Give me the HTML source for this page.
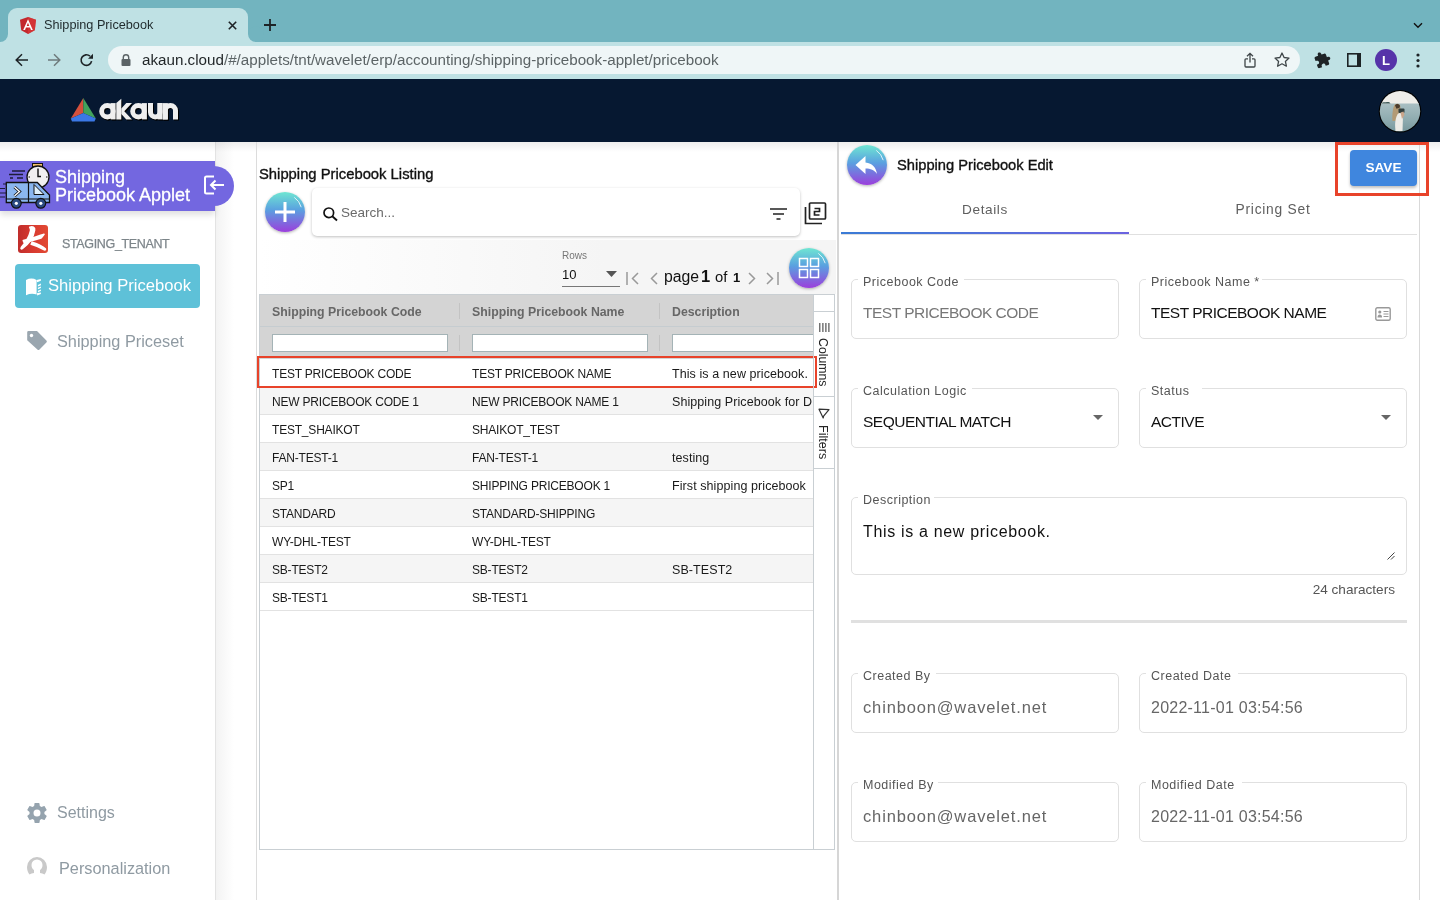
<!DOCTYPE html>
<html><head><meta charset="utf-8">
<style>
*{box-sizing:border-box;margin:0;padding:0}
html,body{width:1440px;height:900px;overflow:hidden;background:#fff;font-family:"Liberation Sans",sans-serif;position:relative}
.a{position:absolute}
.t{position:absolute;white-space:nowrap;line-height:1;will-change:transform}
svg{position:absolute;overflow:visible}
/* chrome */
#tabstrip{left:0;top:0;width:1440px;height:42px;background:#72b4bf}
#tab{left:8px;top:8px;width:240px;height:34px;background:#bfe1e4;border-radius:9px 9px 0 0}
#toolbar{left:0;top:42px;width:1440px;height:37px;background:#bfe1e4}
#addr{left:108px;top:46px;width:1192px;height:28px;background:#eff6f7;border-radius:14px}
#hdr{left:0;top:79px;width:1440px;height:63px;background:#061831}
</style></head><body>
<!-- ============ BROWSER CHROME ============ -->
<div id="tabstrip" class="a"></div>
<div id="tab" class="a"></div>
<div class="a" style="left:0;top:34px;width:8px;height:8px;background:#bfe1e4"></div>
<div class="a" style="left:-8px;top:26px;width:16px;height:16px;background:#72b4bf;border-radius:50%"></div>
<div class="a" style="left:248px;top:34px;width:8px;height:8px;background:#bfe1e4"></div>
<div class="a" style="left:248px;top:26px;width:16px;height:16px;background:#72b4bf;border-radius:50%"></div>
<div id="toolbar" class="a"></div>
<!-- favicon -->
<svg style="left:20px;top:17px" width="16" height="17" viewBox="0 0 16 17"><path d="M8 0L0 2.8l1.2 10.4L8 17l6.8-3.8L16 2.8z" fill="#c3292e"/><path d="M8 0v17l6.8-3.8L16 2.8z" fill="#dd3a3a" opacity=".6"/><path d="M8 2.2L3.2 13h1.8l1-2.4h4l1 2.4h1.8zM6.7 9L8 5.8 9.3 9z" fill="#fff"/></svg>
<div class="t" style="left:44px;top:18.5px;font-size:12.7px;color:#1f2a2c">Shipping Pricebook</div>
<svg style="left:227.5px;top:20.5px" width="9" height="9" viewBox="0 0 9 9"><path d="M.8.8l7.4 7.4M8.2.8L.8 8.2" stroke="#1d2326" stroke-width="1.6"/></svg>
<svg style="left:264px;top:19px" width="12" height="12" viewBox="0 0 12 12"><path d="M6 0v12M0 6h12" stroke="#1d2326" stroke-width="1.8"/></svg>
<svg style="left:1413px;top:22px" width="10" height="6" viewBox="0 0 10 6"><path d="M1 1.2l4 4 4-4" stroke="#111" stroke-width="1.4" fill="none"/></svg>
<!-- nav -->
<svg style="left:15px;top:53px" width="14" height="14" viewBox="0 0 14 14"><path d="M13 7H1.5M7 1.2L1.2 7 7 12.8" stroke="#1d2326" stroke-width="1.5" fill="none"/></svg>
<svg style="left:47px;top:53px" width="14" height="14" viewBox="0 0 14 14"><path d="M1 7h11.5M7 1.2L12.8 7 7 12.8" stroke="#6e7a7c" stroke-width="1.5" fill="none"/></svg>
<svg style="left:79px;top:53px" width="15" height="15" viewBox="0 0 15 15"><path d="M12.6 8.2A5.3 5.3 0 1 1 11 3.2" stroke="#1d2326" stroke-width="1.6" fill="none"/><path d="M14 0.8v5H9z" fill="#1d2326"/></svg>
<div id="addr" class="a"></div>
<svg style="left:121px;top:54px" width="10" height="12" viewBox="0 0 10 12"><path d="M2.3 5V3.5a2.7 2.7 0 0 1 5.4 0V5" stroke="#5b6366" stroke-width="1.4" fill="none"/><rect x="0.5" y="5" width="9" height="7" rx="1" fill="#5b6366"/></svg>
<div class="t" style="left:142px;top:52px;font-size:15.2px;color:#1f2426">akaun.cloud<span style="color:#5c6466">/#/applets/tnt/wavelet/erp/accounting/shipping-pricebook-applet/pricebook</span></div>
<svg style="left:1243px;top:52px" width="14" height="16" viewBox="0 0 14 16"><path d="M7 10.5V1.5M4 4.3L7 1.3l3 3" stroke="#3e4548" stroke-width="1.3" fill="none"/><path d="M5 6.8H3a1 1 0 0 0-1 1V14a1 1 0 0 0 1 1h8a1 1 0 0 0 1-1V7.8a1 1 0 0 0-1-1H9" stroke="#3e4548" stroke-width="1.3" fill="none"/></svg>
<svg style="left:1274px;top:52px" width="16" height="15" viewBox="0 0 16 15"><path d="M8 1l2.1 4.5 4.9.6-3.6 3.3 1 4.8L8 11.8l-4.4 2.4 1-4.8L1 6.1l4.9-.6z" stroke="#3e4548" stroke-width="1.3" fill="none" stroke-linejoin="round"/></svg>
<svg style="left:1314px;top:51px" width="17" height="17" viewBox="0 0 24 24"><path d="M20.5 11H19V7c0-1.1-.9-2-2-2h-4V3.5C13 2.12 11.88 1 10.5 1S8 2.12 8 3.5V5H4c-1.1 0-1.99.9-1.99 2v3.8H3.5c1.49 0 2.7 1.21 2.7 2.7s-1.21 2.7-2.7 2.7H2V20c0 1.1.9 2 2 2h3.8v-1.5c0-1.49 1.21-2.7 2.7-2.7 1.49 0 2.7 1.21 2.7 2.7V22H17c1.1 0 2-.9 2-2v-4h1.5c1.38 0 2.5-1.12 2.5-2.5S21.88 11 20.5 11z" fill="#1d2326" transform="rotate(-20 12 12)"/></svg>
<svg style="left:1347px;top:53px" width="14" height="14" viewBox="0 0 14 14"><rect x="0.8" y="0.8" width="12.4" height="12.4" stroke="#1d2326" stroke-width="1.6" fill="none"/><rect x="10" y="0.8" width="3.2" height="12.4" fill="#1d2326"/></svg>
<div class="a" style="left:1375px;top:49px;width:22px;height:22px;border-radius:50%;background:#5633a9"></div>
<div class="t" style="left:1381.5px;top:54px;font-size:13px;font-weight:bold;color:#fff">L</div>
<svg style="left:1416px;top:53px" width="4" height="15" viewBox="0 0 4 15"><circle cx="2" cy="2" r="1.6" fill="#1d2326"/><circle cx="2" cy="7.5" r="1.6" fill="#1d2326"/><circle cx="2" cy="13" r="1.6" fill="#1d2326"/></svg>
<!-- ============ APP HEADER ============ -->
<div id="hdr" class="a"></div>
<svg style="left:0;top:0" width="200" height="142" viewBox="0 0 200 142">
<path d="M83.3 98L70.8 118.5 83.3 113z" fill="#d5503c"/><path d="M83.3 98L95.8 118.5 83.3 113z" fill="#42a35c"/><path d="M70.8 118.5L83.3 113 95.8 118.5 94.5 121.4H72z" fill="#3b78e6"/>
<g transform="translate(1,1.2)" fill="#000" stroke="#000">
<circle cx="107.4" cy="111.3" r="5.75" stroke-width="4.9" fill="none"/><rect x="110.7" y="103.1" width="4.9" height="16.3" stroke="none"/>
<path d="M116.3 103L121.3 98.8V119.4H116.3z" stroke="none"/><path d="M121.3 108.5L126.3 103.1H132L124.3 111.3 132 119.4H126.3L121.3 114z" stroke="none"/>
<circle cx="138.4" cy="111.3" r="5.75" stroke-width="4.9" fill="none"/><rect x="142" y="103.1" width="4.9" height="16.3" stroke="none"/>
<path d="M150.5 103.1V112.2A4.75 4.75 0 0 0 160 112.2V103.1" stroke-width="5" fill="none"/><rect x="157.5" y="103.1" width="5" height="16.3" stroke="none"/>
<path d="M165.3 119.4V110.5A4.85 4.85 0 0 1 175.5 110.5V119.4" stroke-width="5" fill="none"/><rect x="162.8" y="103.1" width="5" height="16.3" stroke="none"/>
</g>
<g fill="#efefef" stroke="#efefef">
<circle cx="107.4" cy="111.3" r="5.75" stroke-width="4.9" fill="none"/><rect x="110.7" y="103.1" width="4.9" height="16.3" stroke="none"/>
<path d="M116.3 103L121.3 98.8V119.4H116.3z" stroke="none"/><path d="M121.3 108.5L126.3 103.1H132L124.3 111.3 132 119.4H126.3L121.3 114z" stroke="none"/>
<circle cx="138.4" cy="111.3" r="5.75" stroke-width="4.9" fill="none"/><rect x="142" y="103.1" width="4.9" height="16.3" stroke="none"/>
<path d="M150.5 103.1V112.2A4.75 4.75 0 0 0 160 112.2V103.1" stroke-width="5" fill="none"/><rect x="157.5" y="103.1" width="5" height="16.3" stroke="none"/>
<path d="M165.3 119.4V110.5A4.85 4.85 0 0 1 175.5 110.5V119.4" stroke-width="5" fill="none"/><rect x="162.8" y="103.1" width="5" height="16.3" stroke="none"/>
</g></svg>
<svg style="left:1376px;top:88px" width="48" height="48" viewBox="0 0 48 48">
<defs><clipPath id="avc"><circle cx="24" cy="23.3" r="20.2"/></clipPath><linearGradient id="sea" x1="0" y1="0" x2="0" y2="1"><stop offset="0" stop-color="#a9bfc2"/><stop offset=".5" stop-color="#8eabaf"/><stop offset="1" stop-color="#6f9096"/></linearGradient></defs>
<circle cx="24" cy="23.3" r="21.3" fill="#000"/>
<g clip-path="url(#avc)">
<rect x="0" y="0" width="48" height="16" fill="#efeee9"/>
<rect x="0" y="15.5" width="48" height="33" fill="url(#sea)"/>
<path d="M5 15.5c1-1 3-1.5 5-1.2 2-.6 3.5-.2 4.5 1.2z" fill="#3e5a58"/>
<path d="M16.5 33c-.5-6 .3-12 1.5-15 .8-2 2.5-2.6 4-2.2 2 .6 2.8 2.5 2.5 5l-1.5 12z" fill="#b39a74"/>
<path d="M19 17.5c1-1.5 3-1.8 4.3-.8.8.6.8 2 .2 3l-3 1z" fill="#4a3b2c"/>
<rect x="22.5" y="20.5" width="6" height="4.5" rx="1" fill="#33403f"/>
<path d="M23.5 25c1.5 0 3 .8 3.5 2l-.5 16H19.5c-.5-4-.7-9 .5-13 .8-2.5 2-5 3.5-5z" fill="#ecebe6"/>
<path d="M24.5 24.5l3-1 1 3.5-2.5 4z" fill="#c9a58a"/>
</g></svg>

<!-- ============ SIDEBAR ============ -->
<div class="a" style="left:215px;top:142px;width:1px;height:758px;background:#e3e3e3"></div>
<div class="a" style="left:216px;top:142px;width:18px;height:758px;background:linear-gradient(90deg,#f3f3f3,#fff)"></div>
<div class="a" style="left:0;top:142px;width:1440px;height:10px;background:linear-gradient(rgba(0,0,0,.07),rgba(0,0,0,0))"></div>
<div class="a" style="left:0;top:161px;width:215px;height:50px;background:#7367e0;box-shadow:0 4px 6px rgba(0,0,0,.12)"></div>
<div class="a" style="left:165px;top:166px;width:69px;height:40px;background:#7367e0;border-radius:0 20px 20px 0"></div>
<svg style="left:203px;top:175px" width="22" height="20" viewBox="0 0 22 20"><path d="M11 1.5H3.5a1.5 1.5 0 0 0-1.5 1.5v14a1.5 1.5 0 0 0 1.5 1.5H11" stroke="#fff" stroke-width="2" fill="none"/><path d="M21 10H8M12.5 5.5L8 10l4.5 4.5" stroke="#fff" stroke-width="2" fill="none"/></svg>
<!-- truck icon -->
<svg style="left:0;top:163px" width="50" height="46" viewBox="0 0 50 46">
<path d="M12 8h13M9 11.5h14M10 15h3M17 15h6" stroke="#1d1d3a" stroke-width="1.3"/>
<rect x="32.5" y="0.5" width="10" height="3.5" fill="#f4c06a" stroke="#111" stroke-width="1"/>
<circle cx="38" cy="14" r="11" fill="#f1eff0" stroke="#111" stroke-width="1.3"/>
<path d="M38 5.5v8h3" stroke="#111" stroke-width="1.4" fill="none"/><path d="M28.5 14h1.5M46 14h1.5" stroke="#111" stroke-width="1.2"/>
<path d="M3 21h4M0 25.5h5M0 30h7M0 34h5" stroke="#1d1d3a" stroke-width="1.2"/>
<path d="M6.3 19.5h31l12.2 12.5v7.5H6.3z" fill="#8bb7ef" stroke="#111" stroke-width="1.3"/>
<path d="M34 21.5l10 10H34z" fill="#dff0fb" stroke="#111" stroke-width="1"/>
<path d="M28.5 19.5v20" stroke="#111" stroke-width="1.2"/>
<path d="M14.5 24l5 4.5-5 4.5" stroke="#111" stroke-width="3" fill="none"/><path d="M14.5 24l5 4.5-5 4.5" stroke="#fff" stroke-width="1.4" fill="none"/>
<path d="M6.3 36h43.2" stroke="#111" stroke-width="1.1"/>
<circle cx="16.3" cy="40.3" r="4.9" fill="#2b4a82" stroke="#111" stroke-width="1.2"/><circle cx="16.3" cy="40.3" r="1.6" fill="#fff"/>
<circle cx="40.8" cy="40.3" r="4.9" fill="#2b4a82" stroke="#111" stroke-width="1.2"/><circle cx="40.8" cy="40.3" r="1.6" fill="#fff"/>
</svg>
<div class="t" style="left:55px;top:168px;font-size:18px;line-height:18px;color:#fff;-webkit-text-stroke:.3px #fff">Shipping<br>Pricebook Applet</div>
<!-- tenant -->
<div class="a" style="left:18px;top:225px;width:30px;height:28px;border-radius:3px;background:linear-gradient(90deg,#c02d2b,#d83a30 50%,#e24a33)"></div>
<svg style="left:14px;top:220px" width="40" height="40" viewBox="0 0 40 40"><g fill="#fff" stroke="#fff" stroke-width="1.6" stroke-linejoin="round">
<path d="M15.8 7.3C18.5 6.3 21.2 7.2 20.6 10.2C19.6 16.5 15.5 23.5 8.3 28.6C7.2 29.3 6.6 28.4 7.4 27.4C12.2 22 15.3 16.5 16.6 10.8C16.8 9.6 16.4 8.4 15.8 7.3z"/>
<path d="M9.3 20.6C15 19.6 22.5 16.8 30 14.2L27.3 17.8C21.5 19.6 15.5 21.5 10.2 22.6z"/>
<path d="M18.2 22.2C23.5 23.8 28.5 26 31.3 28.8C31.8 29.6 30.9 30.2 29.8 29.6C26.2 27.6 21.8 25.6 17.2 24.3z"/>
</g></svg>
<div class="t" style="left:62px;top:238px;font-size:12.5px;color:#7d858a;letter-spacing:-.35px;-webkit-text-stroke:.25px #7d858a">STAGING_TENANT</div>
<!-- active item -->
<div class="a" style="left:15px;top:264px;width:185px;height:44px;border-radius:4px;background:#5ec1d8"></div>
<svg style="left:22px;top:274px" width="24" height="26" viewBox="0 0 24 26"><g fill="#fff">
<path d="M4 5.9Q9.5 3.3 14.6 5.9V20.6Q9.5 18.8 4 21.2z"/>
<path d="M14.6 5.9L18.9 4.9V6.7L15.1 8.3z"/>
<path d="M15.9 10.9L18.9 9.6V11.2L15.9 12.4zM15.9 13.8L18.9 12.5V14.1L15.9 15.3zM15.9 16.7L18.9 15.4V17L15.9 18.2z"/>
<path d="M15.1 18.9L18.9 18.4V20.1L15.1 21.4z"/>
</g></svg>
<div class="t" style="left:48px;top:278px;font-size:16.6px;color:#fff">Shipping Pricebook</div>
<!-- priceset -->
<svg style="left:26px;top:330px" width="23" height="23" viewBox="0 0 23 23"><path d="M2.5 1H11L20.4 10.4a1.5 1.5 0 0 1 0 2.1L13.5 19.6a1.5 1.5 0 0 1-2.1 0L1.2 10.2V2.3A1.3 1.3 0 0 1 2.5 1z" fill="#9aa6af"/><circle cx="5.5" cy="5.5" r="1.7" fill="#fff"/></svg>
<div class="t" style="left:57px;top:333px;font-size:16.3px;color:#8f9aa2">Shipping Priceset</div>
<!-- settings -->
<svg style="left:25px;top:800.5px" width="24" height="24" viewBox="0 0 24 24"><path d="M19.4 13c.04-.33.06-.66.06-1s-.02-.67-.06-1l2.1-1.65c.2-.15.25-.42.12-.64l-2-3.46c-.12-.22-.38-.3-.6-.22l-2.5 1c-.52-.4-1.08-.73-1.7-.98l-.37-2.65A.49.49 0 0 0 14 2h-4c-.25 0-.46.18-.5.42l-.37 2.65c-.62.25-1.18.59-1.7.98l-2.5-1a.5.5 0 0 0-.6.22l-2 3.46c-.13.22-.07.49.12.64L4.57 11c-.04.33-.07.66-.07 1s.03.67.07 1l-2.1 1.65c-.2.15-.25.42-.12.64l2 3.46c.12.22.38.3.6.22l2.5-1c.52.4 1.08.73 1.7.98l.37 2.65c.04.24.25.42.5.42h4c.25 0 .46-.18.5-.42l.37-2.65c.62-.25 1.18-.59 1.7-.98l2.5 1c.22.08.48 0 .6-.22l2-3.46c.12-.22.07-.49-.12-.64zM12 15.5A3.5 3.5 0 1 1 12 8.5a3.5 3.5 0 0 1 0 7z" fill="#95a3ae"/></svg>
<div class="t" style="left:57px;top:805px;font-size:16px;color:#8f9aa2">Settings</div>
<svg style="left:27px;top:857px" width="20" height="18" viewBox="0 0 20 18"><path d="M10 0a10 10 0 0 0-10 10c0 3 1 5.5 2.5 7.5 1.2-.8 3-1.3 4.5-1.5V13C5.5 12 4.5 10.5 4.5 8a5.5 5.5 0 0 1 11 0c0 2.5-1 4-2.5 5v3c1.5.2 3.3.7 4.5 1.5C19 15.5 20 13 20 10A10 10 0 0 0 10 0z" fill="#c9c9c9"/></svg>
<div class="t" style="left:59px;top:860px;font-size:16.3px;color:#8f9aa2">Personalization</div>

<!-- ============ MIDDLE PANEL ============ -->
<style>
.tc{font-size:12px;letter-spacing:-.2px;color:#1a1a1a}
.td{font-size:12.5px;letter-spacing:.08px}
.th{font-size:12.3px;color:#676767;font-weight:bold}
</style>
<div class="a" style="left:256px;top:142px;width:1px;height:758px;background:#dcdcdc"></div>
<div class="a" style="left:837px;top:142px;width:2px;height:758px;background:#d6d6d6"></div>
<div class="t" style="left:259px;top:167px;font-size:14.8px;color:#111;-webkit-text-stroke:.35px #111">Shipping Pricebook Listing</div>
<!-- add btn -->
<div class="a" style="left:265px;top:192px;width:40px;height:40px;border-radius:50%;background:linear-gradient(#6fe6d2,#5aa0e0 45%,#9b3fdc);box-shadow:0 1px 3px rgba(0,0,0,.3)"></div>
<svg style="left:265px;top:192px" width="40" height="40" viewBox="0 0 40 40"><path d="M20 10v20M10 20h20" stroke="#fff" stroke-width="3"/><path d="M29.3 5.4A17.3 17.3 0 0 1 36.2 15.2" stroke="#fff" stroke-width="1" fill="none" opacity=".8"/></svg>
<!-- search -->
<div class="a" style="left:312px;top:188px;width:488px;height:48px;border-radius:5px;background:#fff;box-shadow:0 1px 3px rgba(0,0,0,.25)"></div>
<svg style="left:323px;top:207px" width="15" height="14" viewBox="0 0 15 14"><circle cx="5.8" cy="5.8" r="4.8" stroke="#111" stroke-width="1.7" fill="none"/><path d="M9.3 9.3L14 13.5" stroke="#111" stroke-width="1.9"/></svg>
<div class="t" style="left:341px;top:206px;font-size:13.5px;color:#6a6a6a">Search...</div>
<svg style="left:770px;top:208px" width="17" height="12" viewBox="0 0 17 12"><path d="M0 1h17M3 6h11M6.5 11h4" stroke="#222" stroke-width="1.6"/></svg>
<svg style="left:804px;top:202px" width="23" height="23" viewBox="0 0 23 23"><path d="M1.5 5v16.5H18" stroke="#222" stroke-width="1.7" fill="none"/><rect x="5.5" y="1" width="16" height="16" rx="1" stroke="#222" stroke-width="1.7" fill="none"/><path d="M10.5 6.5h5v3h-5v3.5h5" stroke="#222" stroke-width="1.7" fill="none"/></svg>
<!-- toolbar band -->
<div class="a" style="left:258px;top:240px;width:578px;height:54px;background:linear-gradient(90deg,#fff,#f5f5f5 60%)"></div>
<div class="t" style="left:562px;top:251px;font-size:10px;color:#777">Rows</div>
<div class="t" style="left:562px;top:268px;font-size:13px;color:#111">10</div>
<svg style="left:606px;top:271px" width="11" height="6" viewBox="0 0 11 6"><path d="M0 0h11L5.5 6z" fill="#555"/></svg>
<div class="a" style="left:562px;top:286px;width:58px;height:1px;background:#777"></div>
<svg style="left:626px;top:272px" width="13" height="13" viewBox="0 0 13 13"><path d="M1 0v13" stroke="#999" stroke-width="1.5"/><path d="M12 1L6.5 6.5 12 12" stroke="#999" stroke-width="1.5" fill="none"/></svg>
<svg style="left:650px;top:272px" width="8" height="13" viewBox="0 0 8 13"><path d="M7 1L1.5 6.5 7 12" stroke="#999" stroke-width="1.5" fill="none"/></svg>
<div class="t" style="left:664px;top:268.5px;font-size:15.8px;color:#111">page</div><div class="t" style="left:701px;top:267.5px;font-size:16.5px;font-weight:bold;color:#111">1</div><div class="t" style="left:715px;top:269.5px;font-size:14.8px;color:#111">of</div><div class="t" style="left:732.5px;top:271px;font-size:13px;font-weight:bold;color:#111">1</div>
<svg style="left:748px;top:272px" width="8" height="13" viewBox="0 0 8 13"><path d="M1 1l5.5 5.5L1 12" stroke="#999" stroke-width="1.5" fill="none"/></svg>
<svg style="left:766px;top:272px" width="13" height="13" viewBox="0 0 13 13"><path d="M1 1l5.5 5.5L1 12" stroke="#999" stroke-width="1.5" fill="none"/><path d="M12 0v13" stroke="#999" stroke-width="1.5"/></svg>
<div class="a" style="left:789px;top:248px;width:40px;height:40px;border-radius:50%;background:linear-gradient(#6fe6d2,#5aa0e0 45%,#9b3fdc);box-shadow:0 1px 3px rgba(0,0,0,.3)"></div>
<svg style="left:789px;top:248px" width="40" height="40" viewBox="0 0 40 40"><rect x="10.5" y="10.5" width="8" height="8" stroke="#fff" stroke-width="1.5" fill="none"/><rect x="21.5" y="10.5" width="8" height="8" stroke="#fff" stroke-width="1.5" fill="none"/><rect x="10.5" y="21.5" width="8" height="8" stroke="#fff" stroke-width="1.5" fill="none"/><rect x="21.5" y="21.5" width="8" height="8" stroke="#fff" stroke-width="1.5" fill="none"/><path d="M29.3 5.4A17.3 17.3 0 0 1 36.2 15.2" stroke="#fff" stroke-width="1" fill="none" opacity=".8"/></svg>
<!-- table -->
<div class="a" style="left:259px;top:294px;width:576px;height:556px;border:1px solid #c9cfd3;background:#fff"></div>
<div class="a" style="left:260px;top:295px;width:553px;height:32px;background:#d4d4d4;border-bottom:1px solid #c5ccd0"></div>
<div class="a" style="left:260px;top:327px;width:553px;height:32px;background:#d4d4d4"></div>
<div class="t th" style="left:272px;top:305.5px">Shipping Pricebook Code</div>
<div class="t th" style="left:472px;top:305.5px">Shipping Pricebook Name</div>
<div class="t th" style="left:672px;top:305.5px">Description</div>
<div class="a" style="left:459px;top:303px;width:1px;height:16px;background:#c3c3c3"></div>
<div class="a" style="left:659px;top:303px;width:1px;height:16px;background:#c3c3c3"></div>
<div class="a" style="left:459px;top:335px;width:1px;height:16px;background:#c3c3c3"></div>
<div class="a" style="left:659px;top:335px;width:1px;height:16px;background:#c3c3c3"></div>
<div class="a" style="left:272px;top:334px;width:176px;height:18px;background:#fff;border:1px solid #a4b3b6"></div>
<div class="a" style="left:472px;top:334px;width:176px;height:18px;background:#fff;border:1px solid #a4b3b6"></div>
<div class="a" style="left:672px;top:334px;width:141px;height:18px;background:#fff;border:1px solid #a4b3b6;border-right:none"></div>
<div class="a" style="left:260px;top:359px;width:553px;height:28px;background:#fff;border-bottom:1px solid #e2e2e2"></div>
<div class="t tc" style="left:272px;top:368px">TEST PRICEBOOK CODE</div><div class="t tc" style="left:472px;top:368px">TEST PRICEBOOK NAME</div><div class="t tc td" style="left:672px;top:368px;width:141px;overflow:hidden">This is a new pricebook.</div>
<div class="a" style="left:260px;top:387px;width:553px;height:28px;background:#f5f5f5;border-bottom:1px solid #e2e2e2"></div>
<div class="t tc" style="left:272px;top:396px">NEW PRICEBOOK CODE 1</div><div class="t tc" style="left:472px;top:396px">NEW PRICEBOOK NAME 1</div><div class="t tc td" style="left:672px;top:396px;width:141px;overflow:hidden">Shipping Pricebook for D</div>
<div class="a" style="left:260px;top:415px;width:553px;height:28px;background:#fff;border-bottom:1px solid #e2e2e2"></div>
<div class="t tc" style="left:272px;top:424px">TEST_SHAIKOT</div><div class="t tc" style="left:472px;top:424px">SHAIKOT_TEST</div><div class="t tc td" style="left:672px;top:424px;width:141px;overflow:hidden"></div>
<div class="a" style="left:260px;top:443px;width:553px;height:28px;background:#f5f5f5;border-bottom:1px solid #e2e2e2"></div>
<div class="t tc" style="left:272px;top:452px">FAN-TEST-1</div><div class="t tc" style="left:472px;top:452px">FAN-TEST-1</div><div class="t tc td" style="left:672px;top:452px;width:141px;overflow:hidden">testing</div>
<div class="a" style="left:260px;top:471px;width:553px;height:28px;background:#fff;border-bottom:1px solid #e2e2e2"></div>
<div class="t tc" style="left:272px;top:480px">SP1</div><div class="t tc" style="left:472px;top:480px">SHIPPING PRICEBOOK 1</div><div class="t tc td" style="left:672px;top:480px;width:141px;overflow:hidden">First shipping pricebook</div>
<div class="a" style="left:260px;top:499px;width:553px;height:28px;background:#f5f5f5;border-bottom:1px solid #e2e2e2"></div>
<div class="t tc" style="left:272px;top:508px">STANDARD</div><div class="t tc" style="left:472px;top:508px">STANDARD-SHIPPING</div><div class="t tc td" style="left:672px;top:508px;width:141px;overflow:hidden"></div>
<div class="a" style="left:260px;top:527px;width:553px;height:28px;background:#fff;border-bottom:1px solid #e2e2e2"></div>
<div class="t tc" style="left:272px;top:536px">WY-DHL-TEST</div><div class="t tc" style="left:472px;top:536px">WY-DHL-TEST</div><div class="t tc td" style="left:672px;top:536px;width:141px;overflow:hidden"></div>
<div class="a" style="left:260px;top:555px;width:553px;height:28px;background:#f5f5f5;border-bottom:1px solid #e2e2e2"></div>
<div class="t tc" style="left:272px;top:564px">SB-TEST2</div><div class="t tc" style="left:472px;top:564px">SB-TEST2</div><div class="t tc td" style="left:672px;top:564px;width:141px;overflow:hidden">SB-TEST2</div>
<div class="a" style="left:260px;top:583px;width:553px;height:28px;background:#fff;border-bottom:1px solid #e2e2e2"></div>
<div class="t tc" style="left:272px;top:592px">SB-TEST1</div><div class="t tc" style="left:472px;top:592px">SB-TEST1</div><div class="t tc td" style="left:672px;top:592px;width:141px;overflow:hidden"></div>

<div class="a" style="left:257px;top:356px;width:560px;height:32px;border:2px solid #e8432a"></div>
<!-- side bar -->
<div class="a" style="left:813px;top:295px;width:1px;height:554px;background:#c9cfd3"></div>
<div class="a" style="left:814px;top:311px;width:20px;height:1px;background:#c9cfd3"></div>
<div class="a" style="left:814px;top:396px;width:20px;height:1px;background:#c9cfd3"></div>
<div class="a" style="left:814px;top:468px;width:20px;height:1px;background:#c9cfd3"></div>
<svg style="left:818px;top:323px" width="12" height="9" viewBox="0 0 12 9"><path d="M1.8 0v9M4.9 0v9M7.9 0v9M10.9 0v9" stroke="#444" stroke-width="1.1"/></svg>
<div class="t" style="left:829px;top:338px;font-size:12.3px;color:#222;transform:rotate(90deg);transform-origin:0 0">Columns</div>
<svg style="left:818px;top:408px" width="12" height="11" viewBox="0 0 12 11"><path d="M1 1.2L11 1.6 5.6 8.2 5.2 10z" stroke="#333" stroke-width="1.2" fill="none" stroke-linejoin="round"/></svg>
<div class="t" style="left:829px;top:425px;font-size:12.6px;color:#222;transform:rotate(90deg);transform-origin:0 0">Filters</div>


<!-- ============ RIGHT PANEL ============ -->
<style>
.fb{border:1px solid #e0e0e0;border-radius:5px;background:#fff}
.fl{font-size:12.5px;letter-spacing:.5px;color:#555}
.fv{font-size:16px}
</style>
<div class="a" style="left:1419px;top:142px;width:1px;height:758px;background:#d9d9d9"></div>
<div class="a" style="left:847px;top:145px;width:40px;height:40px;border-radius:50%;background:linear-gradient(#6fe6d2,#5aa0e0 45%,#9b3fdc);box-shadow:0 1px 3px rgba(0,0,0,.3)"></div>
<svg style="left:847px;top:145px" width="40" height="40" viewBox="0 0 40 40"><path d="M18.5 11L8.5 20l10 9v-5.5c5 0 9 1.5 11.5 5.5-.8-6-4.5-11-11.5-11.5z" fill="#fff"/><path d="M29.3 5.4A17.3 17.3 0 0 1 36.2 15.2" stroke="#fff" stroke-width="1" fill="none" opacity=".8"/></svg>
<div class="t" style="left:897px;top:158px;font-size:14.7px;color:#111;-webkit-text-stroke:.35px #111">Shipping Pricebook Edit</div>
<div class="a" style="left:1350px;top:150px;width:67px;height:36px;border-radius:4px;background:#3f86de;box-shadow:0 2px 3px rgba(0,0,0,.25)"></div>
<div class="t" style="left:1350px;top:161px;width:67px;text-align:center;font-size:13.6px;font-weight:bold;color:#fff">SAVE</div>
<div class="a" style="left:1335px;top:142px;width:94px;height:54px;border:3px solid #e8432a"></div>
<div class="t" style="left:841px;top:202.5px;width:288px;text-align:center;font-size:13.6px;letter-spacing:.6px;color:#5f5f5f">Details</div>
<div class="t" style="left:1129px;top:202.5px;width:288px;text-align:center;font-size:13.8px;letter-spacing:.75px;color:#5f5f5f">Pricing Set</div>
<div class="a" style="left:841px;top:234px;width:576px;height:1px;background:#e0e0e0"></div>
<div class="a" style="left:841px;top:232px;width:288px;height:2px;background:linear-gradient(90deg,#3a7bd5,#6b63e0)"></div>
<div class="a fb" style="left:851px;top:279px;width:268px;height:60px"></div>
<div class="a" style="left:858px;top:277px;width:106px;height:4px;background:#fff"></div>
<div class="t fl" style="left:863px;top:276px;">Pricebook Code</div>
<div class="t fv" style="left:863px;top:306px;color:#777;font-size:15.5px;letter-spacing:-.5px;margin-top:-1px">TEST PRICEBOOK CODE</div>
<div class="a fb" style="left:1139px;top:279px;width:268px;height:60px"></div>
<div class="a" style="left:1146px;top:277px;width:116px;height:4px;background:#fff"></div>
<div class="t fl" style="left:1151px;top:276px;">Pricebook Name *</div>
<div class="t fv" style="left:1151px;top:306px;color:#111;font-size:15.5px;letter-spacing:-.5px;margin-top:-1px">TEST PRICEBOOK NAME</div>
<svg style="left:1375px;top:307px" width="16" height="14" viewBox="0 0 16 14"><rect x="0.8" y="0.8" width="14.4" height="12.4" rx="1.5" stroke="#999" stroke-width="1.4" fill="none"/><circle cx="4.8" cy="5" r="1.6" fill="#999"/><path d="M2.5 10.5c0-2 1-3 2.3-3s2.3 1 2.3 3z" fill="#999"/><path d="M8.5 4.5h5M8.5 7h5M8.5 9.5h5" stroke="#999" stroke-width="1.2"/></svg>
<div class="a fb" style="left:851px;top:388px;width:268px;height:60px"></div>
<div class="a" style="left:858px;top:386px;width:114px;height:4px;background:#fff"></div>
<div class="t fl" style="left:863px;top:385px;">Calculation Logic</div>
<div class="t fv" style="left:863px;top:415px;color:#111;font-size:15.5px;letter-spacing:-.5px;margin-top:-1px">SEQUENTIAL MATCH</div>
<svg style="left:1093px;top:415px" width="10" height="5" viewBox="0 0 10 5"><path d="M0 0h10L5 5z" fill="#666"/></svg>
<div class="a fb" style="left:1139px;top:388px;width:268px;height:60px"></div>
<div class="a" style="left:1146px;top:386px;width:56px;height:4px;background:#fff"></div>
<div class="t fl" style="left:1151px;top:385px;">Status</div>
<div class="t fv" style="left:1151px;top:415px;color:#111;font-size:15.5px;letter-spacing:-.5px;margin-top:-1px">ACTIVE</div>
<svg style="left:1381px;top:415px" width="10" height="5" viewBox="0 0 10 5"><path d="M0 0h10L5 5z" fill="#666"/></svg>
<div class="a fb" style="left:851px;top:497px;width:556px;height:78px"></div>
<div class="a" style="left:858px;top:495px;width:76px;height:4px;background:#fff"></div>
<div class="t fl" style="left:863px;top:494px;">Description</div>
<div class="t fv" style="left:863px;top:524px;color:#111;letter-spacing:.67px">This is a new pricebook.</div>
<svg style="left:1387px;top:552px" width="8" height="8" viewBox="0 0 8 8"><path d="M7.5 0.5L0.5 7.5M7.5 4L4 7.5" stroke="#444" stroke-width="1"/></svg>
<div class="t" style="left:1295px;top:582.5px;width:100px;text-align:right;font-size:13.6px;color:#555">24 characters</div>
<div class="a" style="left:851px;top:620px;width:556px;height:3px;background:#e0e0e0"></div>
<div class="a fb" style="left:851px;top:673px;width:268px;height:60px"></div>
<div class="a" style="left:858px;top:671px;width:78px;height:4px;background:#fff"></div>
<div class="t fl" style="left:863px;top:670px;">Created By</div>
<div class="t fv" style="left:863px;top:700px;color:#666;font-size:16.5px;letter-spacing:.85px;margin-top:-1px">chinboon@wavelet.net</div>
<div class="a fb" style="left:1139px;top:673px;width:268px;height:60px"></div>
<div class="a" style="left:1146px;top:671px;width:92px;height:4px;background:#fff"></div>
<div class="t fl" style="left:1151px;top:670px;">Created Date</div>
<div class="t fv" style="left:1151px;top:700px;color:#666;letter-spacing:.24px">2022-11-01 03:54:56</div>
<div class="a fb" style="left:851px;top:782px;width:268px;height:60px"></div>
<div class="a" style="left:858px;top:780px;width:80px;height:4px;background:#fff"></div>
<div class="t fl" style="left:863px;top:779px;">Modified By</div>
<div class="t fv" style="left:863px;top:809px;color:#666;font-size:16.5px;letter-spacing:.85px;margin-top:-1px">chinboon@wavelet.net</div>
<div class="a fb" style="left:1139px;top:782px;width:268px;height:60px"></div>
<div class="a" style="left:1146px;top:780px;width:96px;height:4px;background:#fff"></div>
<div class="t fl" style="left:1151px;top:779px;">Modified Date</div>
<div class="t fv" style="left:1151px;top:809px;color:#666;letter-spacing:.24px">2022-11-01 03:54:56</div>
</body></html>
